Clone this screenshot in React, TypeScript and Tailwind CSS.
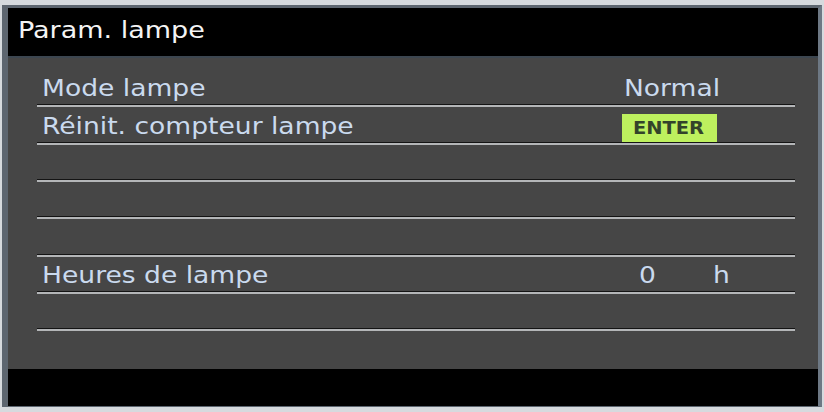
import React from "react";

const Sep = () => (
  <div className="h-[3px] border-t border-[#141414] bg-[#b4b6b8]" />
);

const Label = ({ children }: { children: React.ReactNode }) => (
  <span className="inline-block origin-left scale-x-[1.13] whitespace-nowrap">{children}</span>
);

const Row = ({ label, value }: { label?: string; value?: React.ReactNode }) => (
  <div>
    <div className="grid h-[34.33px] grid-cols-[585px_1fr] items-end pb-[1px] text-[23.5px] leading-[30px] text-[#cadaee]">
      <div className="pl-[5px]">{label ? <Label>{label}</Label> : null}</div>
      <div>{value}</div>
    </div>
    <Sep />
  </div>
);

export default function App() {
  return (
    <div
      className="h-[412px] w-[824px] bg-[#d6dade] pb-[5px] pl-[2px] pr-[2px] pt-[5px]"
      style={{ fontFamily: '"DejaVu Sans", Verdana, sans-serif' }}
    >
      <div className="flex h-full flex-col border-b border-l-[6px] border-r-[4px] border-t-[3px] border-[#5d6670] border-b-[#5d6670] border-r-[#6d7884]">
        <div className="flex h-[48px] items-center bg-black pb-[3px] pl-[10px] text-[22.5px] text-[#f4f4f4]">
          <span className="inline-block origin-left scale-x-[1.2] whitespace-nowrap">Param. lampe</span>
        </div>
        <div className="h-[2px] bg-[#3c4650]" />
        <div className="h-[311px] bg-[#464646] pl-[29px] pr-[23px] pt-[12px]">
          <Row label="Mode lampe" value={<span className="pl-[2px]"><Label>Normal</Label></span>} />
          <Row
            label="Réinit. compteur lampe"
            value={
              <div className="mb-[-1px] flex h-[28px] w-[95px] items-center bg-[#bdf05e] pl-[11px] text-[18px] font-bold text-[#33432a]">
                <span className="inline-block origin-left scale-x-[1.08]">ENTER</span>
              </div>
            }
          />
          <Row />
          <Row />
          <Row />
          <Row
            label="Heures de lampe"
            value={
              <div className="flex">
                <span className="w-[91px] pl-[17px]"><Label>0</Label></span>
                <span><Label>h</Label></span>
              </div>
            }
          />
          <Row />
        </div>
        <div className="flex-1 bg-black" />
      </div>
    </div>
  );
}
